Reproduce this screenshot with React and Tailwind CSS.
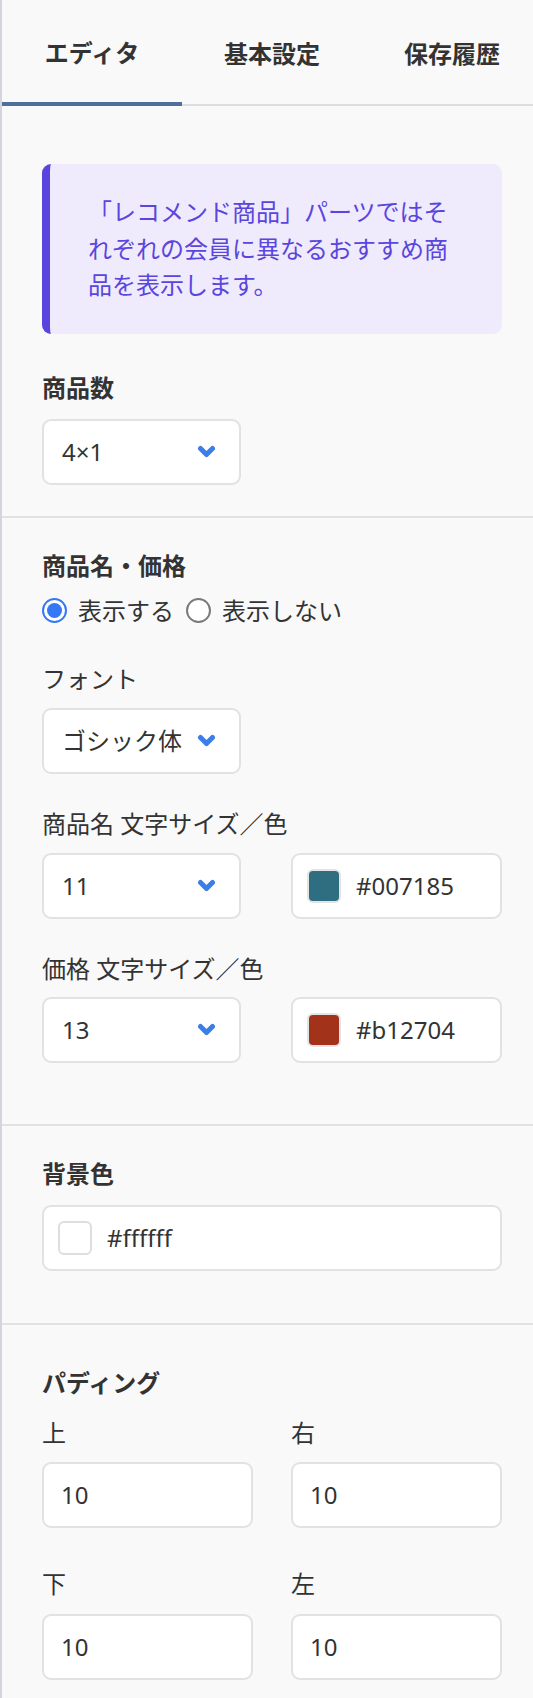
import React from "react";

function Chevron() {
  return (
    <svg width="19" height="13" viewBox="0 0 19 13" className="shrink-0">
      <polyline
        points="3.5,3.5 9.5,9.5 15.5,3.5"
        fill="none"
        stroke="#3b7de9"
        strokeWidth="5"
        strokeLinecap="round"
        strokeLinejoin="round"
      />
    </svg>
  );
}

function Select({ value }) {
  return (
    <div className="w-[199px] h-[66px] bg-white border-2 border-[#e2e2e2] rounded-[9px] flex items-center justify-between pl-[18px] pr-[23px]">
      <span>{value}</span>
      <Chevron />
    </div>
  );
}

function ColorInput({ color, value, swatchBorder = "border-[#d9d9d9]" }) {
  return (
    <div className="w-full h-[66px] bg-white border-2 border-[#e2e2e2] rounded-[9px] flex items-center pl-[14px] gap-[15px]">
      <div
        className={`w-[34px] h-[34px] rounded-[6px] border-2 ${swatchBorder}`}
        style={{ backgroundColor: color }}
      />
      <span>{value}</span>
    </div>
  );
}

function TextInput({ value }) {
  return (
    <div className="w-full h-[66px] bg-white border-2 border-[#e2e2e2] rounded-[9px] flex items-center pl-[17px]">
      {value}
    </div>
  );
}

export default function App() {
  return (
    <div className="w-[533px] min-h-[1698px] overflow-hidden bg-[#f9f9f9] font-['Noto_Sans','Noto_Sans_CJK_JP',sans-serif] text-[24px] leading-[36px] text-[#333]">
      <div className="w-[542px] min-h-[1698px] border-l-2 border-[#d4d4dc]">

        {/* TABS */}
        <div className="flex">
          <div className="w-[180px] h-[106px] pt-[4px] flex items-center justify-center font-bold border-b-4 border-[#4e6f9b]">
            エディタ
          </div>
          <div className="w-[180px] h-[106px] pt-[4px] flex items-center justify-center font-bold border-b-2 border-[#dedede]">
            基本設定
          </div>
          <div className="w-[180px] h-[106px] pt-[4px] flex items-center justify-center font-bold border-b-2 border-[#dedede]">
            保存履歴
          </div>
        </div>

        {/* 商品数 */}
        <div className="px-[40px] pt-[58px] pb-[31px]">
          <div className="bg-[#efebfc] border-l-[8px] border-[#5a44de] rounded-[9px] pl-[38px] pr-[38px] py-[30px] text-[#5a46de] leading-[36.5px]">
            「レコメンド商品」パーツではそれぞれの会員に異なるおすすめ商品を表示します。
          </div>
          <div className="mt-[36px] font-bold">商品数</div>
          <div className="mt-[13px]">
            <Select value="4×1" />
          </div>
        </div>

        {/* 商品名・価格 */}
        <div className="border-t-2 border-[#e2e2e2] px-[40px] pt-[30px] pb-[61px]">
          <div className="font-bold">商品名・価格</div>
          <div className="mt-[9px] flex items-center">
            <div className="w-[25px] h-[25px] rounded-full border-[2.5px] border-[#3478f6] bg-white flex items-center justify-center">
              <div className="w-[15px] h-[15px] rounded-full bg-[#3478f6]" />
            </div>
            <span className="ml-[11px]">表示する</span>
            <div className="ml-[12px] w-[25px] h-[25px] rounded-full border-2 border-[#7a7a7a] bg-white" />
            <span className="ml-[11px]">表示しない</span>
          </div>

          <div className="mt-[32px]">フォント</div>
          <div className="mt-[11px]">
            <Select value="ゴシック体" />
          </div>

          <div className="mt-[32px]">商品名 文字サイズ／色</div>
          <div className="mt-[11px] grid grid-cols-2 gap-x-[38px]">
            <Select value="11" />
            <ColorInput color="#2e6e80" value="#007185" swatchBorder="border-[#e4e4e4]" />
          </div>

          <div className="mt-[32px]">価格 文字サイズ／色</div>
          <div className="mt-[10px] grid grid-cols-2 gap-x-[38px]">
            <Select value="13" />
            <ColorInput color="#a3321a" value="#b12704" swatchBorder="border-[#e4e4e4]" />
          </div>
        </div>

        {/* 背景色 */}
        <div className="border-t-2 border-[#e2e2e2] px-[40px] pt-[30px] pb-[52px]">
          <div className="font-bold">背景色</div>
          <div className="mt-[13px]">
            <ColorInput color="#ffffff" value="#ffffff" swatchBorder="border-[#dedede]" />
          </div>
        </div>

        {/* パディング */}
        <div className="border-t-2 border-[#e2e2e2] px-[40px] pt-[40px] pb-[20px]">
          <div className="font-bold">パディング</div>
          <div className="mt-[14px] grid grid-cols-2 gap-x-[38px]">
            <div>
              <div>上</div>
              <div className="mt-[11px]">
                <TextInput value="10" />
              </div>
            </div>
            <div>
              <div>右</div>
              <div className="mt-[11px]">
                <TextInput value="10" />
              </div>
            </div>
          </div>
          <div className="mt-[38px] grid grid-cols-2 gap-x-[38px]">
            <div>
              <div>下</div>
              <div className="mt-[12px]">
                <TextInput value="10" />
              </div>
            </div>
            <div>
              <div>左</div>
              <div className="mt-[12px]">
                <TextInput value="10" />
              </div>
            </div>
          </div>
        </div>

      </div>
    </div>
  );
}
